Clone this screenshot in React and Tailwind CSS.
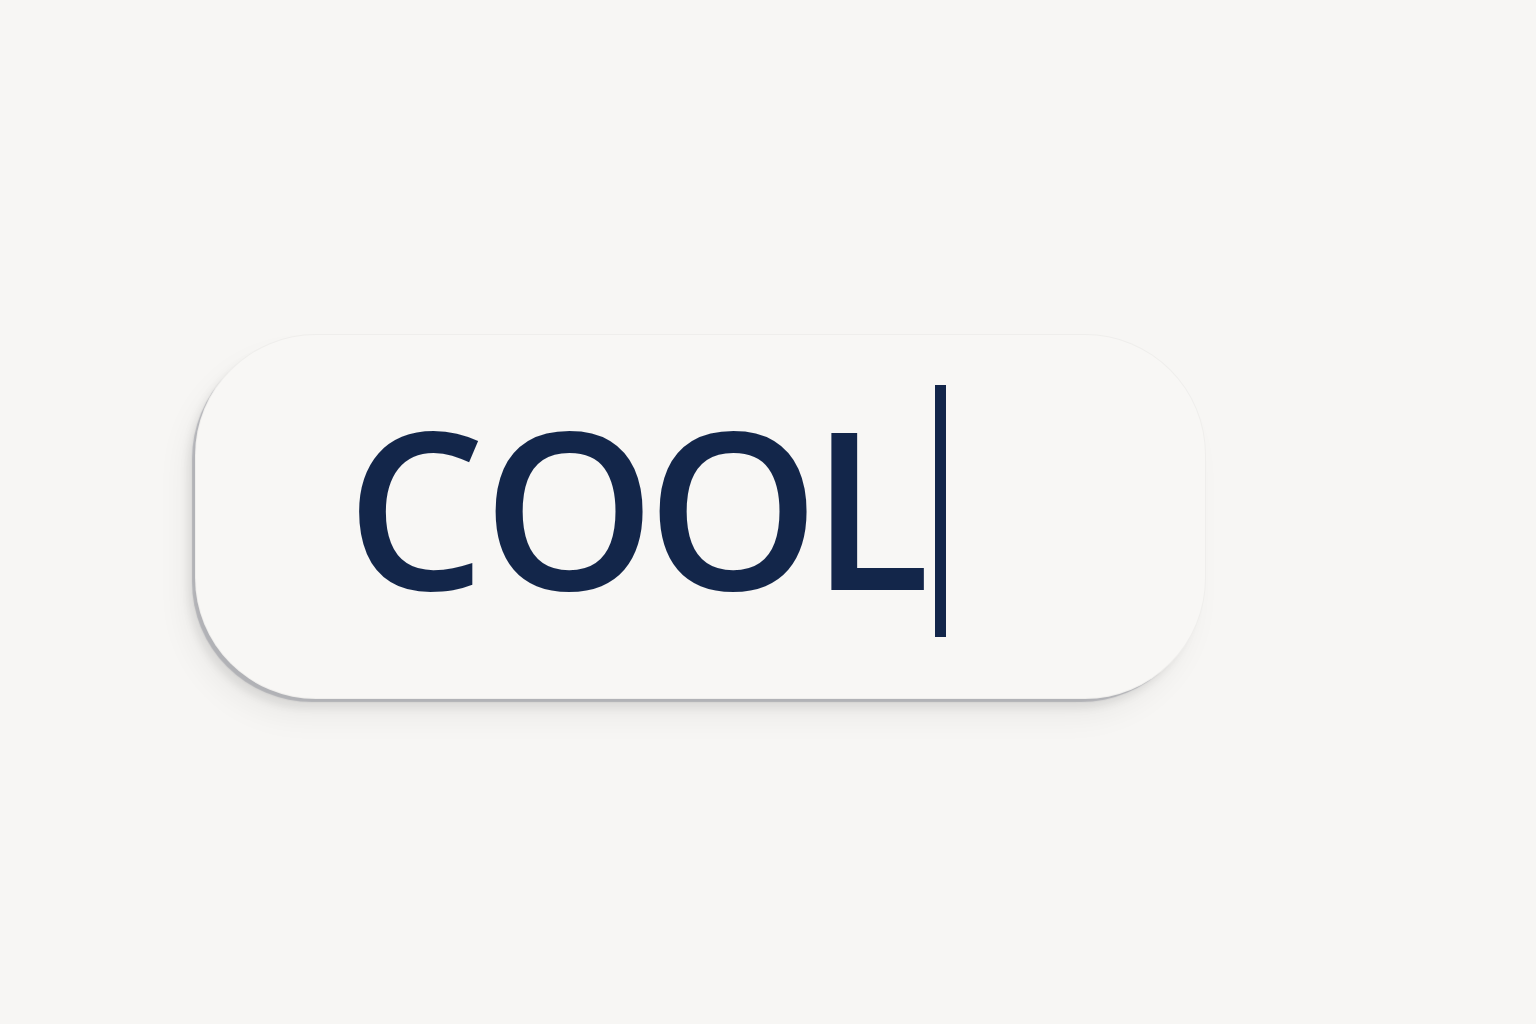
export default function App() {
  return (
    <div className="min-h-screen w-full bg-[#f7f6f4] pl-[196px] pt-[335px]">
      <div className="flex h-[363px] w-[1009px] items-center rounded-[120px] bg-[#f8f7f5] pl-[150px] shadow-[-4px_4px_1px_rgba(150,152,160,0.6),-8px_10px_8px_rgba(0,0,0,0.08),-12px_20px_30px_rgba(0,0,0,0.05)] ring-1 ring-[#efeeec]">
        <span
          className="mb-[24px] text-[220px] font-semibold leading-none tracking-[-9px] text-[#13264a]"
          style={{ fontFamily: "'Open Sans', 'Noto Sans', sans-serif" }}
        >
          <span className="mr-[6px]">C</span>OOL
        </span>
        <span className="mb-[12px] ml-[14px] h-[252px] w-[11px] bg-[#13264a]" />
      </div>
    </div>
  );
}
